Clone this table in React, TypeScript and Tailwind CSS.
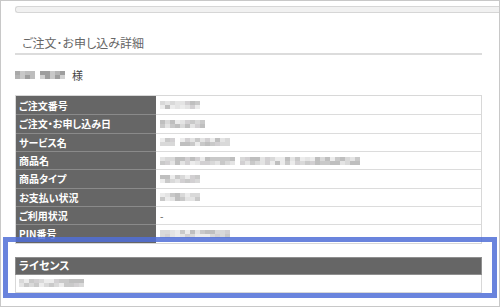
import React from 'react';

// mosaic shades for the blurred-out personal data
const shades = ['bg-[#c9c9c9]', 'bg-[#d9d9d9]', 'bg-[#e4e4e4]', 'bg-[#bfbfbf]', 'bg-[#d2d0d2]', 'bg-[#ececec]'];

function Mosaic({ width, seed = 1, dark = false }: { width: number; seed?: number; dark?: boolean }) {
    const cols = Math.max(1, Math.round(width / 5));
    const cells: string[] = [];
    let s = seed * 9301 + 49297;
    for (let i = 0; i < cols * 2; i++) {
        s = (s * 9301 + 49297) % 233280;
        const idx = Math.floor((s / 233280) * shades.length);
        cells.push(dark ? ['bg-[#a9a9a9]', 'bg-[#bdbdbd]', 'bg-[#9e9e9e]', 'bg-[#c8c8c8]', 'bg-[#b3b3b3]', 'bg-[#d0d0d0]'][idx] : shades[idx]);
    }
    return (
        <div className="grid grid-rows-2 grid-flow-col auto-cols-[5px] h-[8px] blur-[0.6px]">
            {cells.map((c, i) => <div key={i} className={c} />)}
        </div>
    );
}

const rows: { label: string; value: React.ReactNode }[] = [
    { label: 'ご注文番号', value: <Mosaic width={40} seed={3} /> },
    { label: 'ご注文・お申し込み日', value: <Mosaic width={45} seed={7} /> },
    { label: 'サービス名', value: <div className="flex gap-[5px]"><Mosaic width={15} seed={11} /><Mosaic width={50} seed={5} /></div> },
    { label: '商品名', value: <div className="flex gap-[5px]"><Mosaic width={75} seed={2} /><Mosaic width={120} seed={9} /></div> },
    { label: '商品タイプ', value: <Mosaic width={40} seed={13} /> },
    { label: 'お支払い状況', value: <Mosaic width={40} seed={17} /> },
    { label: 'ご利用状況', value: <span className="text-[10px] text-[#555] leading-none">-</span> },
    { label: 'PIN番号', value: <Mosaic width={70} seed={21} /> },
];

export default function App() {
    return (
        <div className="relative w-[500px] h-[307px] overflow-hidden border border-[#c8c8c8] bg-white font-['Noto_Sans_CJK_JP',sans-serif] [font-feature-settings:'palt']">
            {/* top bar */}
            <div className="ml-[14px] mt-[5px] h-[7px] rounded-l-[3px] border border-r-0 border-[#d6d6d6] bg-[#f1f1f1]" />

            <div className="ml-[14px] mr-[17px]">
                <h2 className="mt-[22px] pl-[7px] pb-[2px] border-b-2 border-[#dcdcdc] text-[12px] leading-[16px] text-[#666] font-normal">
                    ご注文･お申し込み詳細
                </h2>

                {/* customer name */}
                <div className="mt-[13px] flex items-center h-[14px]">
                    <div className="w-[20px]"><Mosaic width={20} seed={4} dark /></div>
                    <div className="ml-[5px] w-[25px]"><Mosaic width={25} seed={8} dark /></div>
                    <span className="ml-[7px] text-[11px] text-[#444]">様</span>
                </div>

                {/* order details */}
                <div className="mt-[13px] border border-[#d8d8d8]">
                    {rows.map((r, i) => (
                        <div key={r.label} className={`flex h-[18.33px] ${i > 0 ? 'border-t border-[#dcdcdc]' : ''}`}>
                            <div className={`w-[140px] shrink-0 bg-[#666] flex items-center pl-[3px] text-white text-[10px] font-bold ${i > 0 ? 'border-t border-[#8a8a8a] -mt-px' : ''}`}>
                                {r.label}
                            </div>
                            <div className="flex-1 flex items-center pl-[4px]">{r.value}</div>
                        </div>
                    ))}
                </div>

                {/* license */}
                <div className="mt-[13px] border border-[#d8d8d8]">
                    <div className="h-[18px] bg-[#666] border border-[#8f8f8f] -m-px flex items-center pl-[3px] text-white text-[11px] font-bold">
                        ライセンス
                    </div>
                    <div className="h-[18px] flex items-center pl-[3px]">
                        <Mosaic width={65} seed={15} />
                    </div>
                </div>
            </div>

            {/* highlight frame */}
            <div className="absolute left-[2px] top-[236px] w-[494px] h-[61px] border-[5px] border-[rgba(80,110,215,0.85)]" />
        </div>
    );
}
